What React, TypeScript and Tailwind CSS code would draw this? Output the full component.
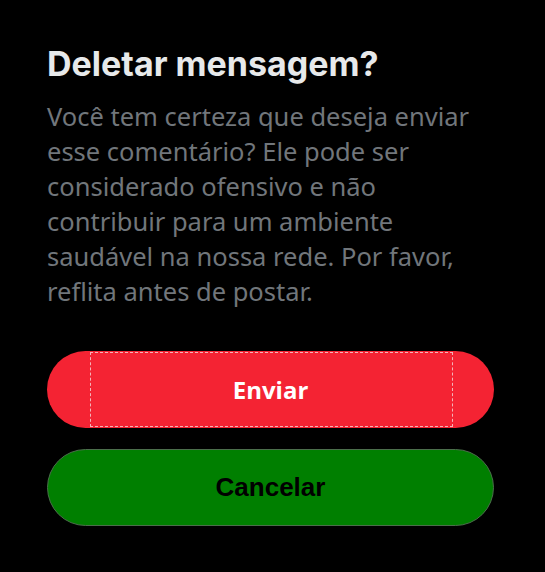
import React from 'react';

const App: React.FC = () => {
  return (
    <div className="min-h-[572px] w-[545px] bg-black">
      <div className="flex flex-col px-[47px] pt-[44px]">
        <h1 className="font-['Inter',sans-serif] text-[34px] font-bold leading-[40px] text-[#e7e9ea]">
          Deletar mensagem?
        </h1>
        <p className="mt-[15px] pr-[10px] font-['Noto_Sans',sans-serif] text-[25.5px] leading-[35px] text-[#71767b]">
          Você tem certeza que deseja enviar esse comentário? Ele pode ser considerado ofensivo e não contribuir para
          um ambiente saudável na nossa rede. Por favor, reflita antes de postar.
        </p>
        <div className="mt-[42px] flex w-[447px] flex-col gap-[21px]">
          <button className="relative flex h-[77px] items-center justify-center rounded-full bg-[#f42333]">
            <span className="absolute inset-y-[1px] left-[43px] right-[41px] border border-dashed border-[#f4b3b8]" />
            <span className="relative font-['Open_Sans',sans-serif] text-[24px] font-bold text-white">Enviar</span>
          </button>
          <button className="flex h-[77px] items-center justify-center rounded-full border border-[#4b6e4b] bg-[#007f00]">
            <span className="font-['Liberation_Sans',sans-serif] text-[26px] font-bold text-black">Cancelar</span>
          </button>
        </div>
      </div>
    </div>
  );
};

export default App;
